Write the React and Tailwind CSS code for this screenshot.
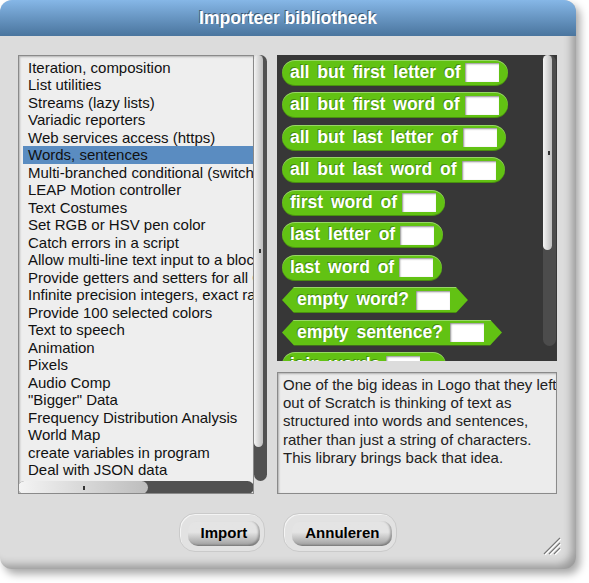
import React from "react";

const LIBS = [
  "Iteration, composition",
  "List utilities",
  "Streams (lazy lists)",
  "Variadic reporters",
  "Web services access (https)",
  "Words, sentences",
  "Multi-branched conditional (switch)",
  "LEAP Motion controller",
  "Text Costumes",
  "Set RGB or HSV pen color",
  "Catch errors in a script",
  "Allow multi-line text input to a block",
  "Provide getters and setters for all GUI-controlled global settings",
  "Infinite precision integers, exact rationals, complex",
  "Provide 100 selected colors",
  "Text to speech",
  "Animation",
  "Pixels",
  "Audio Comp",
  "\"Bigger\" Data",
  "Frequency Distribution Analysis",
  "World Map",
  "create variables in program",
  "Deal with JSON data",
  "Parallelization",
];

const REPORTERS = [
  "all but first letter of",
  "all but first word of",
  "all but last letter of",
  "all but last word of",
  "first word of",
  "last letter of",
  "last word of",
];

const PREDICATES = ["empty word?", "empty sentence?"];

function Slot() {
  return <span className="inline-block h-[19px] w-[34px] shrink-0 bg-white shadow-[inset_1px_1px_2px_rgba(0,0,0,0.45)]" />;
}

function Label({ children }) {
  return (
    <span className="whitespace-nowrap text-[17.5px] font-bold leading-none text-white [word-spacing:3px] [text-shadow:-1px_-1px_0_rgba(0,0,0,0.3)]">
      {children}
    </span>
  );
}

function Reporter({ label, extra }) {
  return (
    <div className="flex h-[26px] w-fit shrink-0 items-center gap-[5px] rounded-[13px] bg-[#62c213] pl-[8px] pr-[9px] shadow-[inset_0_1px_0_rgba(255,255,255,0.35),inset_0_-1px_0_rgba(0,0,0,0.25)]">
      <Label>{label}</Label>
      <Slot />
      {extra && <span className="text-[12px] text-white">{extra}</span>}
    </div>
  );
}

function Predicate({ label }) {
  return (
    <div className="flex h-[26px] w-fit shrink-0 items-center gap-[7px] bg-[#62c213] pl-[15px] pr-[18px] [clip-path:polygon(12px_0,calc(100%-12px)_0,100%_50%,calc(100%-12px)_100%,12px_100%,0_50%)] shadow-[inset_0_1px_0_rgba(255,255,255,0.35),inset_0_-1px_0_rgba(0,0,0,0.25)]">
      <Label>{label}</Label>
      <Slot />
    </div>
  );
}

function Thumb({ className }) {
  return (
    <div className={`relative rounded-full bg-gradient-to-r from-[#f4f4f4] to-[#bdbdbd] ${className}`}>
      <span className="absolute left-1/2 top-1/2 h-[4px] w-[2px] -translate-y-1/2 bg-[#333]" />
    </div>
  );
}

export default function App() {
  return (
    <div className="h-[583px] w-[589px] overflow-hidden bg-white font-['Liberation_Sans',Arial,sans-serif]">
      <div className="relative flex h-[569px] w-[576px] flex-col rounded-[12px] bg-[#dcdcdc] shadow-[inset_-7px_-7px_9px_-3px_rgba(0,0,0,0.3),4px_5px_8px_rgba(0,0,0,0.35)]">
        {/* title */}
        <div className="flex h-[36px] shrink-0 items-center justify-center rounded-t-[12px] bg-gradient-to-b from-[#86b7e7] to-[#4a759e]">
          <span className="text-[17.5px] font-bold text-white [text-shadow:-1px_-1px_0_rgba(0,0,0,0.45)]">Importeer bibliotheek</span>
        </div>

        {/* body */}
        <div className="flex gap-[10px] pl-[18px] pt-[19px]">
          {/* library list */}
          <div className="flex h-[439px]">
            <div className="flex w-[236px] flex-col overflow-hidden border border-[#8a8a8a] bg-[#eeeeee] shadow-[inset_1px_1px_2px_rgba(0,0,0,0.25)]">
              <div className="flex-1 overflow-hidden pt-[2.5px]">
                {LIBS.map((name) => (
                  <div
                    key={name}
                    className={`ml-[4px] h-[17.5px] whitespace-nowrap pl-[5px] text-[15px] leading-[17.5px] text-[#111] ${
                      name === "Words, sentences" ? "bg-[#5a8cc1]" : ""
                    }`}
                  >
                    {name}
                  </div>
                ))}
              </div>
              <div className="mx-[-1px] mb-[-1px] flex h-[13px] shrink-0 rounded-full bg-[#515151]">
                <Thumb className="h-[13px] w-[130px] bg-gradient-to-b" />
              </div>
            </div>
            <div className="flex h-[426px] w-[13px] flex-col rounded-full bg-[#515151]">
              <Thumb className="h-[392px] w-[9px]" />
            </div>
          </div>

          {/* right column */}
          <div className="flex w-[280px] flex-col gap-[11px]">
            <div className="relative h-[306px] overflow-hidden bg-[#373737]">
              <div className="flex flex-col gap-[6.5px] pl-[5px] pt-[4.5px]">
                {REPORTERS.map((r) => (
                  <Reporter key={r} label={r} />
                ))}
                {PREDICATES.map((p) => (
                  <Predicate key={p} label={p} />
                ))}
                <Reporter label="join words" extra="◂▸" />
              </div>
              <div className="absolute right-[1px] top-0 flex h-[291px] w-[13px] flex-col rounded-full bg-[#4c4c4c]">
                <Thumb className="h-[195px] w-[9px]" />
              </div>
            </div>
            <div className="h-[122px] overflow-hidden whitespace-nowrap border border-[#8a8a8a] bg-[#ececec] pl-[5px] pt-[3px] text-[15px] leading-[18.2px] text-[#222] shadow-[inset_1px_1px_2px_rgba(0,0,0,0.25)]">
              One of the big ideas in Logo that they left
              <br />
              out of Scratch is thinking of text as
              <br />
              structured into words and sentences,
              <br />
              rather than just a string of characters.
              <br />
              This library brings back that idea.
            </div>
          </div>
        </div>

        {/* buttons */}
        <div className="mt-[19px] flex justify-center gap-[18px]">
          {["Import", "Annuleren"].map((b) => (
            <div
              key={b}
              className="flex h-[39px] rounded-[16px] border border-[#cacaca] bg-[#e2e2e2] pb-[5px] pl-[8px] pr-[4px] pt-[7px] shadow-[inset_1px_1px_0_#f4f4f4]"
            >
              <div className="flex items-center rounded-[10px] bg-gradient-to-b from-[#e4e4e4] from-45% to-[#9c9c9c] px-[13px] shadow-[inset_-2px_-1px_2px_rgba(0,0,0,0.25)]">
                <span className="text-[15px] font-bold text-black">{b}</span>
              </div>
            </div>
          ))}
        </div>

        {/* resize handle */}
        <svg className="absolute bottom-[14px] right-[15px]" width="20" height="18" viewBox="0 0 20 18">
          <g strokeWidth="1.2">
            <line x1="3" y1="17" x2="19" y2="1" stroke="#777" />
            <line x1="8" y1="17" x2="19" y2="6" stroke="#777" />
            <line x1="13" y1="17" x2="19" y2="11" stroke="#777" />
            <line x1="4" y1="18" x2="20" y2="2" stroke="#fff" />
            <line x1="9" y1="18" x2="20" y2="7" stroke="#fff" />
            <line x1="14" y1="18" x2="20" y2="12" stroke="#fff" />
          </g>
        </svg>
      </div>
    </div>
  );
}
